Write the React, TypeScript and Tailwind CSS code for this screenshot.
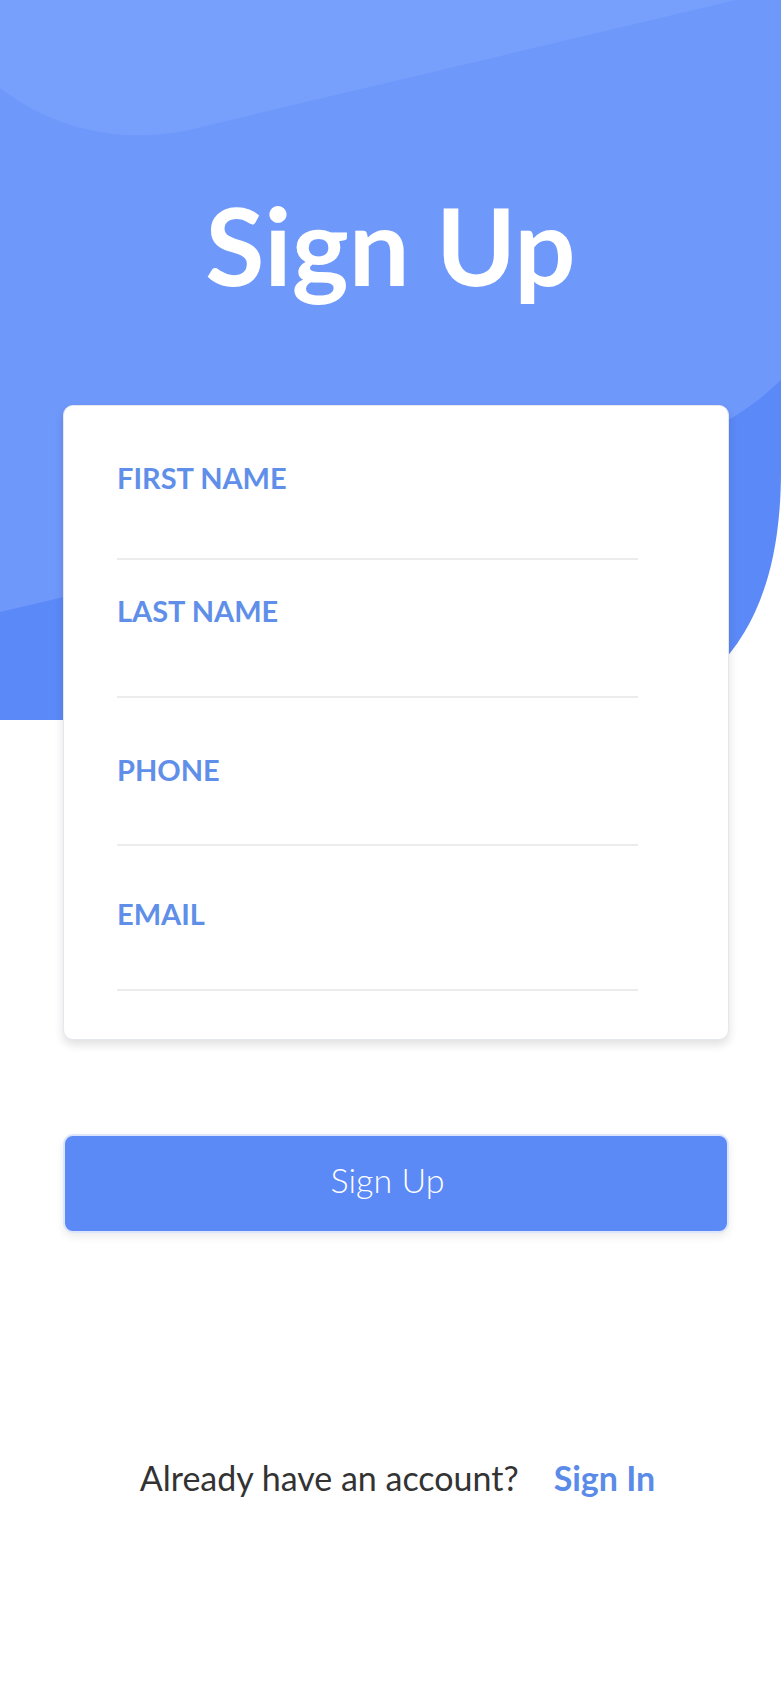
const fields = [
  { label: "FIRST NAME", top: "mt-0", gap: "mt-[65px]" },
  { label: "LAST NAME", top: "mt-[36px]", gap: "mt-[70px]" },
  { label: "PHONE", top: "mt-[57px]", gap: "mt-[59px]" },
  { label: "EMAIL", top: "mt-[53px]", gap: "mt-[60px]" },
];

const HeaderWave = () => (
  <svg
    className="absolute left-0 top-0 w-full h-[720px]"
    viewBox="0 0 781 720"
    preserveAspectRatio="none"
  >
    {/* base / darker lower area with rounded bottom-right */}
    <path d="M0 0 H781 V470 C781 610 730 680 640 720 H0 Z" fill="#5b89f7" />
    {/* main blue */}
    <path d="M0 0 H781 V380 C745 415 700 440 620 466 L0 612 Z" fill="#6f98fb" />
    {/* light wave at the top */}
    <path d="M0 0 H736 L205 126 C150 142 70 142 0 88 Z" fill="#77a0fc" />
  </svg>
);

export default function App() {
  return (
    <div
      className="relative w-full min-h-[1691px] bg-white overflow-hidden"
      style={{ fontFamily: "Lato, 'Open Sans', sans-serif" }}
    >
      <HeaderWave />

      <div className="relative flex flex-col">
        {/* Title */}
        <h1 className="pt-[190px] text-center text-white font-bold text-[108px] leading-none">
          Sign Up
        </h1>

        {/* Form card */}
        <div className="ml-[63px] mt-[107px] w-[666px] rounded-[10px] bg-white border border-[#e4e7ee] shadow-[0_5px_10px_rgba(0,0,0,0.12)] pt-[57px] pb-[48px] pl-[53px]">
          {fields.map((f) => (
            <div key={f.label} className={f.top}>
              <div className="text-[29px] leading-[30px] font-bold text-[#5f8fe9]">
                {f.label}
              </div>
              <div className={`${f.gap} h-[2px] w-[521px] bg-[#ececec]`} />
            </div>
          ))}
        </div>

        {/* Button */}
        <button className="ml-[63px] mt-[94px] w-[666px] h-[99px] rounded-[10px] bg-[#5b89f6] border-2 border-[#dce5fc] shadow-[0_4px_8px_rgba(0,0,0,0.08)] flex items-center justify-center pb-[8px] pr-[17px] text-white text-[34px] font-light leading-none">
          Sign Up
        </button>

        {/* Footer */}
        <div className="mt-[228px] flex items-center justify-center gap-[35px] pl-[14px] text-[34px] leading-none">
          <span className="text-[#333333]">Already have an account?</span>
          <span className="font-bold text-[#5b8be8]">Sign In</span>
        </div>
      </div>
    </div>
  );
}
